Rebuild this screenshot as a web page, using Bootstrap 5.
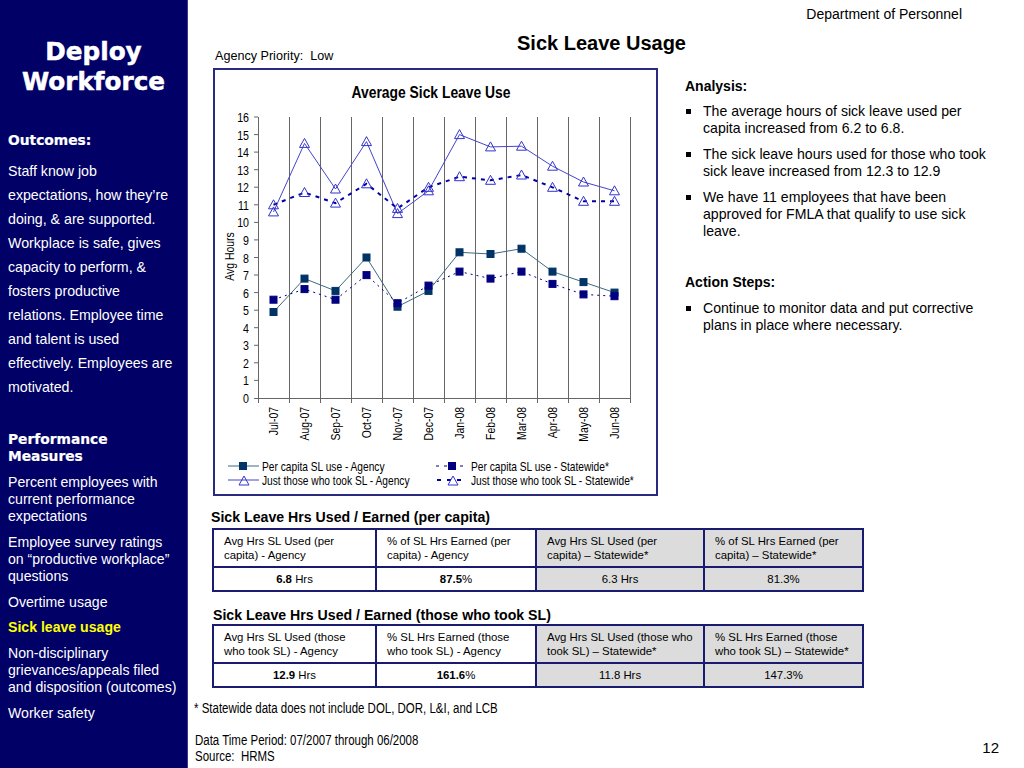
<!DOCTYPE html>
<html lang="en">
<head>
<meta charset="utf-8">
<title>Sick Leave Usage</title>
<link href="https://cdn.jsdelivr.net/npm/bootstrap@5.3.0/dist/css/bootstrap.min.css" rel="stylesheet">
<style>
html,body{height:768px;overflow:hidden}
body{background:#fff;color:#000;font-family:"Liberation Sans",Arial,sans-serif;font-size:14px}
.slide{width:1024px;height:768px}
.side-rail{width:188px;flex:none;background:#000066;color:#fff;padding:37px 8px 0;border-right:1px solid #3a3a8c;font-size:14.1px}
.side-title{font-family:"DejaVu Sans",sans-serif;font-weight:700;font-size:24.7px;line-height:30px;text-align:center;margin:0 0 35px;color:#fff;-webkit-text-stroke:.5px #fff}
.side-head{font-family:"DejaVu Sans",sans-serif;font-weight:700;font-size:13.8px;line-height:17px;margin:0;-webkit-text-stroke:.2px #fff}
.side-long{line-height:24px;margin:10px 0 32px;font-size:14.2px}
.side-lead{margin-bottom:9px}
.side-item{line-height:17px;margin:0 0 8.8px}
.side-hot{color:#ffff00;font-weight:700}
.work{flex:1;min-width:0;position:relative}
.dept{text-align:right;padding:6px 62px 0 0;line-height:16px;font-size:14px;height:22px}
.head-row{display:flex;margin-top:9px;height:37px}
.prio{width:329px;flex:none;font-size:12.6px;line-height:14px;padding:18px 0 0 27px}
.page-title{font-weight:700;font-size:20px;line-height:24px;margin:0}
.mid-row{display:flex;height:428px}
.chart-box{width:445px;height:428px;margin-left:25px;border:2px solid #2a2a80;flex:none}
.chart-box svg{display:block;width:441px;height:424px}
.notes{padding:10px 30px 0 27px;font-size:14.1px;line-height:17px;flex:1}
.notes h2{font-size:14px;font-weight:700;line-height:16px;margin:0 0 9px}
.notes ul{list-style:none;margin:0;padding:0}
.notes li{position:relative;padding-left:18px;margin-bottom:9px}
.notes li::before{content:"";position:absolute;left:1px;top:6px;width:4.5px;height:4.5px;background:#000}
.notes .act{margin-top:34px;margin-bottom:10px}
.tbl-title{font-weight:700;font-size:14.15px;line-height:16px;margin:0}
.t1{padding:13px 0 0 23px}
.t2{padding:15px 0 0 25px}
.stat-grid{width:650px;margin:3px 0 0 24px;border-collapse:collapse;table-layout:fixed;font-size:11.4px;line-height:14px}
.t2 + .stat-grid{margin-top:1px}
.stat-grid td{border:2px solid #1a1a70;padding:4px 4px 4px 10px;vertical-align:middle}
.stat-grid .val{text-align:center;padding:2px 4px;height:24px;line-height:18px}
.stat-grid .gry{background:#dcdcdc}
.squeeze{transform:scaleX(.82);transform-origin:left center}
.foot-a{font-size:14px;line-height:16px;margin:12px 0 0 6px}
.foot-b{font-size:14px;line-height:16px;margin:16px 0 0 7px}
.pg{position:absolute;right:25px;bottom:12px;font-size:15px;line-height:16px}
.chart-box text{font-family:"Liberation Sans",sans-serif;font-size:13px;fill:#000}
.chart-box .ct{font-size:17px;font-weight:700}
</style>
</head>
<body>
<div class="slide d-flex">
  <aside class="side-rail">
    <h1 class="side-title">Deploy Workforce</h1>
    <p class="side-head">Outcomes:</p>
    <p class="side-long">Staff know job expectations, how they’re doing, &amp; are supported. Workplace is safe, gives capacity to perform, &amp; fosters productive relations. Employee time and talent is used effectively. Employees are motivated.</p>
    <p class="side-head side-lead">Performance Measures</p>
    <p class="side-item">Percent employees with current performance expectations</p>
    <p class="side-item">Employee survey ratings on “productive workplace” questions</p>
    <p class="side-item">Overtime usage</p>
    <p class="side-item side-hot">Sick leave usage</p>
    <p class="side-item">Non-disciplinary grievances/appeals filed and disposition (outcomes)</p>
    <p class="side-item">Worker safety</p>
  </aside>
  <main class="work">
    <div class="dept">Department of Personnel</div>
    <div class="head-row">
      <div class="prio">Agency Priority:&nbsp; Low</div>
      <h1 class="page-title">Sick Leave Usage</h1>
    </div>
    <div class="mid-row">
      <div class="chart-box">
        <svg viewBox="215 70 441 424" xmlns="http://www.w3.org/2000/svg">
          <defs>
            <rect id="sa" x="-3.5" y="-3.5" width="7" height="7" fill="#003366" stroke="#003366"/>
            <rect id="sb" x="-3.5" y="-3.5" width="7" height="7" fill="#000080" stroke="#000080"/>
            <path id="tr" d="M0-5 5 4H-5Z" fill="none" stroke="#3333cc" stroke-width="1"/>
          </defs>
          <text class="ct" x="431" y="98" text-anchor="middle" textLength="159" lengthAdjust="spacingAndGlyphs">Average Sick Leave Use</text>
          <g stroke="#666" stroke-width="1" fill="none">
            <path d="M258.5 117V403M254 117H258M254 134.6H258M254 152.1H258M254 169.7H258M254 187.2H258M254 204.8H258M254 222.4H258M254 239.9H258M254 257.5H258M254 275H258M254 292.6H258M254 310.2H258M254 327.7H258M254 345.3H258M254 362.8H258M254 380.4H258M254 398.5H631"/>
            <path d="M289.5 117V403M320.5 117V403M351.5 117V403M382.5 117V403M413.5 117V403M444.5 117V403M475.5 117V403M506.5 117V403M537.5 117V403M568.5 117V403M599.5 117V403M630.5 117V403"/>
          </g>
          <g text-anchor="end">
            <text transform="translate(249 122) scale(.82 1)">16</text><text transform="translate(249 139.6) scale(.82 1)">15</text><text transform="translate(249 157.1) scale(.82 1)">14</text><text transform="translate(249 174.7) scale(.82 1)">13</text><text transform="translate(249 192.2) scale(.82 1)">12</text><text transform="translate(249 209.8) scale(.82 1)">11</text><text transform="translate(249 227.4) scale(.82 1)">10</text><text transform="translate(249 244.9) scale(.82 1)">9</text><text transform="translate(249 262.5) scale(.82 1)">8</text><text transform="translate(249 280) scale(.82 1)">7</text><text transform="translate(249 297.6) scale(.82 1)">6</text><text transform="translate(249 315.2) scale(.82 1)">5</text><text transform="translate(249 332.7) scale(.82 1)">4</text><text transform="translate(249 350.3) scale(.82 1)">3</text><text transform="translate(249 367.8) scale(.82 1)">2</text><text transform="translate(249 385.4) scale(.82 1)">1</text><text transform="translate(249 403) scale(.82 1)">0</text>
          </g>
          <text transform="translate(234 256.5) rotate(-90) scale(.8 1)" text-anchor="middle">Avg Hours</text>
          <g text-anchor="end">
            <text transform="translate(278 407) rotate(-90) scale(.8 1)">Jul-07</text>
            <text transform="translate(309 407) rotate(-90) scale(.8 1)">Aug-07</text>
            <text transform="translate(340 407) rotate(-90) scale(.8 1)">Sep-07</text>
            <text transform="translate(371 407) rotate(-90) scale(.8 1)">Oct-07</text>
            <text transform="translate(402 407) rotate(-90) scale(.8 1)">Nov-07</text>
            <text transform="translate(433 407) rotate(-90) scale(.8 1)">Dec-07</text>
            <text transform="translate(464 407) rotate(-90) scale(.8 1)">Jan-08</text>
            <text transform="translate(495 407) rotate(-90) scale(.8 1)">Feb-08</text>
            <text transform="translate(526 407) rotate(-90) scale(.8 1)">Mar-08</text>
            <text transform="translate(557 407) rotate(-90) scale(.8 1)">Apr-08</text>
            <text transform="translate(588 407) rotate(-90) scale(.8 1)">May-08</text>
            <text transform="translate(619 407) rotate(-90) scale(.8 1)">Jun-08</text>
          </g>
          <path fill="none" stroke="#3d6a80" d="M273.5 312 304.5 278.6 335.5 290.9 366.5 257.5 397.5 306.7 428.5 290.9 459.5 252.3 490.5 254 521.5 248.7 552.5 271.6 583.5 282.1 614.5 292.6"/>
          <path fill="none" stroke="#000080" stroke-dasharray="2 4" d="M273.5 299.7 304.5 289.1 335.5 299.7 366.5 275.1 397.5 303.2 428.5 285.6 459.5 271.6 490.5 278.6 521.5 271.6 552.5 283.9 583.5 294.4 614.5 296.2"/>
          <path fill="none" stroke="#4444cc" d="M273.5 211.9 304.5 143.4 335.5 189 366.5 141.6 397.5 213.6 428.5 190.8 459.5 134.6 490.5 146.9 521.5 146.2 552.5 166.2 583.5 182 614.5 190.8"/>
          <path fill="none" stroke="#0000aa" stroke-width="2" stroke-dasharray="4 5" d="M273.5 204.8 304.5 192.5 335.5 203.1 366.5 183.8 397.5 208.4 428.5 187.3 459.5 176.7 490.5 180.3 521.5 175 552.5 187.3 583.5 201.3 614.5 201.3"/>
          <use href="#sa" x="273.5" y="312"/><use href="#sa" x="304.5" y="278.6"/><use href="#sa" x="335.5" y="290.9"/><use href="#sa" x="366.5" y="257.5"/><use href="#sa" x="397.5" y="306.7"/><use href="#sa" x="428.5" y="290.9"/><use href="#sa" x="459.5" y="252.3"/><use href="#sa" x="490.5" y="254"/><use href="#sa" x="521.5" y="248.7"/><use href="#sa" x="552.5" y="271.6"/><use href="#sa" x="583.5" y="282.1"/><use href="#sa" x="614.5" y="292.6"/>
          <use href="#sb" x="273.5" y="299.7"/><use href="#sb" x="304.5" y="289.1"/><use href="#sb" x="335.5" y="299.7"/><use href="#sb" x="366.5" y="275.1"/><use href="#sb" x="397.5" y="303.2"/><use href="#sb" x="428.5" y="285.6"/><use href="#sb" x="459.5" y="271.6"/><use href="#sb" x="490.5" y="278.6"/><use href="#sb" x="521.5" y="271.6"/><use href="#sb" x="552.5" y="283.9"/><use href="#sb" x="583.5" y="294.4"/><use href="#sb" x="614.5" y="296.2"/>
          <use href="#tr" x="273.5" y="211.9"/><use href="#tr" x="304.5" y="143.4"/><use href="#tr" x="335.5" y="189"/><use href="#tr" x="366.5" y="141.6"/><use href="#tr" x="397.5" y="213.6"/><use href="#tr" x="428.5" y="190.8"/><use href="#tr" x="459.5" y="134.6"/><use href="#tr" x="490.5" y="146.9"/><use href="#tr" x="521.5" y="146.2"/><use href="#tr" x="552.5" y="166.2"/><use href="#tr" x="583.5" y="182"/><use href="#tr" x="614.5" y="190.8"/>
          <use href="#tr" x="273.5" y="204.8"/><use href="#tr" x="304.5" y="192.5"/><use href="#tr" x="335.5" y="203.1"/><use href="#tr" x="366.5" y="183.8"/><use href="#tr" x="397.5" y="208.4"/><use href="#tr" x="428.5" y="187.3"/><use href="#tr" x="459.5" y="176.7"/><use href="#tr" x="490.5" y="180.3"/><use href="#tr" x="521.5" y="175"/><use href="#tr" x="552.5" y="187.3"/><use href="#tr" x="583.5" y="201.3"/><use href="#tr" x="614.5" y="201.3"/>
          <path fill="none" stroke="#3d6a80" d="M228 466H259"/><use href="#sa" x="243" y="466"/>
          <path fill="none" stroke="#4444cc" d="M228 480H259"/><use href="#tr" x="244" y="481"/>
          <path fill="none" stroke="#000080" stroke-dasharray="3 5" d="M436 466H467"/><use href="#sb" x="452" y="466"/>
          <path fill="none" stroke="#0000aa" stroke-width="2" stroke-dasharray="4 6" d="M437 480H467"/><use href="#tr" x="453" y="481"/>
          <text transform="translate(262 471) scale(.785 1)">Per capita SL use - Agency</text>
          <text transform="translate(262 484.5) scale(.785 1)">Just those who took SL - Agency</text>
          <text transform="translate(471 471) scale(.785 1)">Per capita SL use - Statewide*</text>
          <text transform="translate(471 484.5) scale(.785 1)">Just those who took SL - Statewide*</text>
        </svg>
      </div>
      <div class="notes">
        <h2>Analysis:</h2>
        <ul>
          <li>The average hours of sick leave used per capita increased from 6.2 to 6.8.</li>
          <li>The sick leave hours used for those who took sick leave increased from 12.3 to 12.9</li>
          <li>We have 11 employees that have been approved for FMLA that qualify to use sick leave.</li>
        </ul>
        <h2 class="act">Action Steps:</h2>
        <ul>
          <li>Continue to monitor data and put corrective plans in place where necessary.</li>
        </ul>
      </div>
    </div>
    <p class="tbl-title t1">Sick Leave Hrs Used / Earned (per capita)</p>
    <table class="stat-grid">
      <colgroup><col style="width:163px"><col style="width:160px"><col style="width:168px"><col style="width:159px"></colgroup>
      <tr><td>Avg Hrs SL Used (per<br>capita) - Agency</td><td>% of SL Hrs Earned (per<br>capita) - Agency</td><td class="gry">Avg Hrs SL Used (per<br>capita) – Statewide*</td><td class="gry">% of SL Hrs Earned (per<br>capita) – Statewide*</td></tr>
      <tr><td class="val"><b>6.8</b> Hrs</td><td class="val"><b>87.5</b>%</td><td class="val gry">6.3 Hrs</td><td class="val gry">81.3%</td></tr>
    </table>
    <p class="tbl-title t2">Sick Leave Hrs Used / Earned (those who took SL)</p>
    <table class="stat-grid">
      <colgroup><col style="width:163px"><col style="width:160px"><col style="width:168px"><col style="width:159px"></colgroup>
      <tr><td>Avg Hrs SL Used (those<br>who took SL) - Agency</td><td>% SL Hrs Earned (those<br>who took SL) - Agency</td><td class="gry">Avg Hrs SL Used (those who<br>took SL) – Statewide*</td><td class="gry">% SL Hrs Earned (those<br>who took SL) – Statewide*</td></tr>
      <tr><td class="val"><b>12.9</b> Hrs</td><td class="val"><b>161.6</b>%</td><td class="val gry">11.8 Hrs</td><td class="val gry">147.3%</td></tr>
    </table>
    <p class="foot-a squeeze">* Statewide data does not include DOL, DOR, L&amp;I, and LCB</p>
    <p class="foot-b squeeze">Data Time Period: 07/2007 through 06/2008<br>Source:&nbsp; HRMS</p>
    <div class="pg">12</div>
  </main>
</div>
<script src="https://cdn.jsdelivr.net/npm/bootstrap@5.3.0/dist/js/bootstrap.bundle.min.js"></script>
</body>
</html>
